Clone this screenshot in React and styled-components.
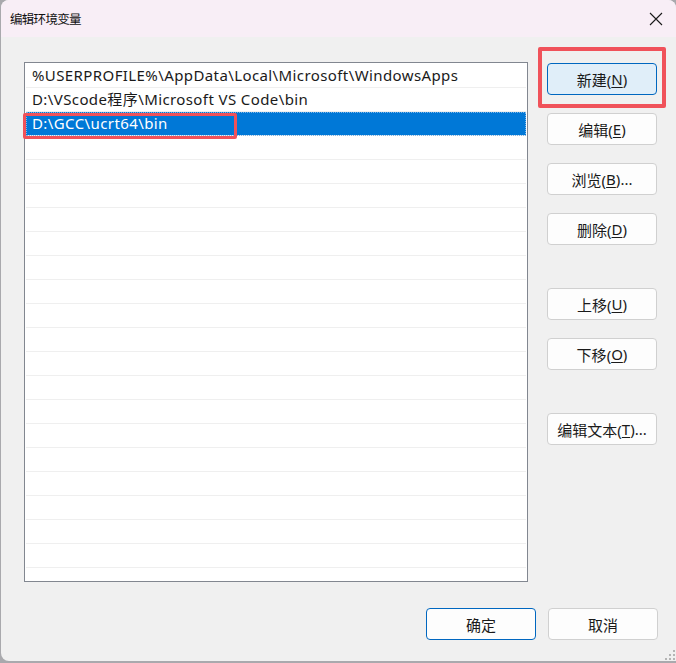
import React from 'react';
import styled, { createGlobalStyle } from 'styled-components';

const GlobalStyle = createGlobalStyle`
  html, body {
    margin: 0;
    padding: 0;
    background: #a9a9ad;
  }
  body {
    font-family: "Noto Sans", "Noto Sans CJK SC", sans-serif;
    color: #1a1a1a;
  }
`;

const paths = [
  '%USERPROFILE%\\AppData\\Local\\Microsoft\\WindowsApps',
  'D:\\VScode程序\\Microsoft VS Code\\bin',
  'D:\\GCC\\ucrt64\\bin',
];
const ROW_COUNT = 22;
const SELECTED = 2;

const sideButtons = [
  { label: '新建', key: 'N', focused: true, gapBefore: 0 },
  { label: '编辑', key: 'E', gapBefore: 18 },
  { label: '浏览', key: 'B', dots: true, gapBefore: 18 },
  { label: '删除', key: 'D', gapBefore: 18 },
  { label: '上移', key: 'U', gapBefore: 43 },
  { label: '下移', key: 'O', gapBefore: 18 },
  { label: '编辑文本', key: 'T', dots: true, gapBefore: 43 },
];

const Mnemonic = ({ k }) => (
  <>
    (<u>{k}</u>)
  </>
);

export default function App() {
  return (
    <>
      <GlobalStyle />
      <Window>
        <TitleBar>
          <Title>编辑环境变量</Title>
          <CloseButton aria-label="关闭">
            <svg width="14" height="14" viewBox="0 0 14 14">
              <path d="M1 1 L13 13 M13 1 L1 13" stroke="#1a1a1a" strokeWidth="1.1" fill="none" />
            </svg>
          </CloseButton>
        </TitleBar>

        <Body>
          <MainRow>
            <ListWrap>
              <PathList>
                {Array.from({ length: ROW_COUNT }).map((_, i) => (
                  <Row key={i} selected={i === SELECTED}>
                    {paths[i] || ''}
                  </Row>
                ))}
              </PathList>
              <RowMark />
            </ListWrap>

            <ButtonColumn>
              {sideButtons.map((b) => (
                <ButtonSlot key={b.key} gap={b.gapBefore}>
                  <Button focused={b.focused}>
                    {b.label}
                    <Mnemonic k={b.key} />
                    {b.dots && '...'}
                  </Button>
                  {b.focused && <ButtonMark />}
                </ButtonSlot>
              ))}
            </ButtonColumn>
          </MainRow>

          <Footer>
            <Button primary>确定</Button>
            <Button>取消</Button>
          </Footer>
        </Body>

        <SizeGrip width="11" height="11" viewBox="0 0 11 11">
          {[
            [9, 1], [9, 5], [5, 5], [9, 9], [5, 9], [1, 9],
          ].map(([x, y]) => (
            <rect key={`${x}-${y}`} x={x} y={y} width="2" height="2" fill="#b4b4b4" />
          ))}
        </SizeGrip>
      </Window>
    </>
  );
}

const Window = styled.div`
  position: relative;
  margin-left: 1px;
  width: 675px;
  height: 661px;
  background: #f0f0f0;
  border-radius: 8px 8px 0 8px;
  overflow: hidden;
  display: flex;
  flex-direction: column;
`;

const TitleBar = styled.div`
  height: 37px;
  flex: none;
  background: #f8eef6;
  display: flex;
  align-items: center;
  justify-content: space-between;
  padding: 0 13px 0 9px;
`;

const Title = styled.span`
  font-family: "Noto Sans CJK SC", sans-serif;
  font-size: 12.5px;
  letter-spacing: -0.7px;
  color: #111;
`;

const CloseButton = styled.div`
  width: 14px;
  height: 14px;
  display: flex;
`;

const Body = styled.div`
  flex: 1;
  padding: 25px 18px 0 23px;
  display: flex;
  flex-direction: column;
`;

const MainRow = styled.div`
  display: flex;
  gap: 19px;
  align-items: flex-start;
`;

const ListWrap = styled.div`
  position: relative;
`;

const PathList = styled.div`
  width: 500px;
  height: 517px;
  padding: 1px 1px 0;
  border: 1px solid #828790;
  background: #fff;
  overflow: hidden;
`;

const Row = styled.div`
  height: 23px;
  line-height: 23px;
  border-bottom: 1px solid #efefef;
  padding-left: 6px;
  font-size: 15px;
  letter-spacing: 0.4px;
  white-space: nowrap;
  color: ${(p) => (p.selected ? '#fff' : '#1a1a1a')};
  background: ${(p) => (p.selected ? '#0078d7' : 'transparent')};
  outline: ${(p) => (p.selected ? '1px dotted #7fb6e6' : 'none')};
  outline-offset: -1px;
`;

// red annotation frame over the selected entry
const RowMark = styled.span`
  position: absolute;
  left: -1px;
  top: 51px;
  width: 208px;
  height: 20px;
  border: 3px solid #f0525a;
  border-radius: 2px;
  pointer-events: none;
`;

const ButtonColumn = styled.div`
  display: flex;
  flex-direction: column;
  padding-top: 1px;
`;

const ButtonSlot = styled.div`
  position: relative;
  margin-top: ${(p) => p.gap}px;
`;

const ButtonMark = styled.span`
  position: absolute;
  left: -9px;
  right: -9px;
  top: -16px;
  bottom: -13px;
  border: 4px solid #f0525a;
  border-radius: 2px;
  pointer-events: none;
`;

const Button = styled.button`
  width: 110px;
  height: 32px;
  box-sizing: border-box;
  border-radius: 4px;
  border: 1px solid ${(p) => (p.focused || p.primary ? '#0067c0' : '#d0d0d0')};
  background: ${(p) => (p.focused ? '#e0eef9' : '#fdfdfd')};
  font-family: "Noto Sans", "Noto Sans CJK SC", sans-serif;
  font-size: 15px;
  color: #1a1a1a;
  padding: 0;
  display: flex;
  align-items: center;
  justify-content: center;

  u {
    text-decoration-thickness: 1px;
    text-underline-offset: 2px;
  }
`;

const Footer = styled.div`
  display: flex;
  justify-content: flex-end;
  gap: 12px;
  margin-top: 26px;
`;

const SizeGrip = styled.svg`
  position: absolute;
  right: 1px;
  bottom: 1px;
`;
